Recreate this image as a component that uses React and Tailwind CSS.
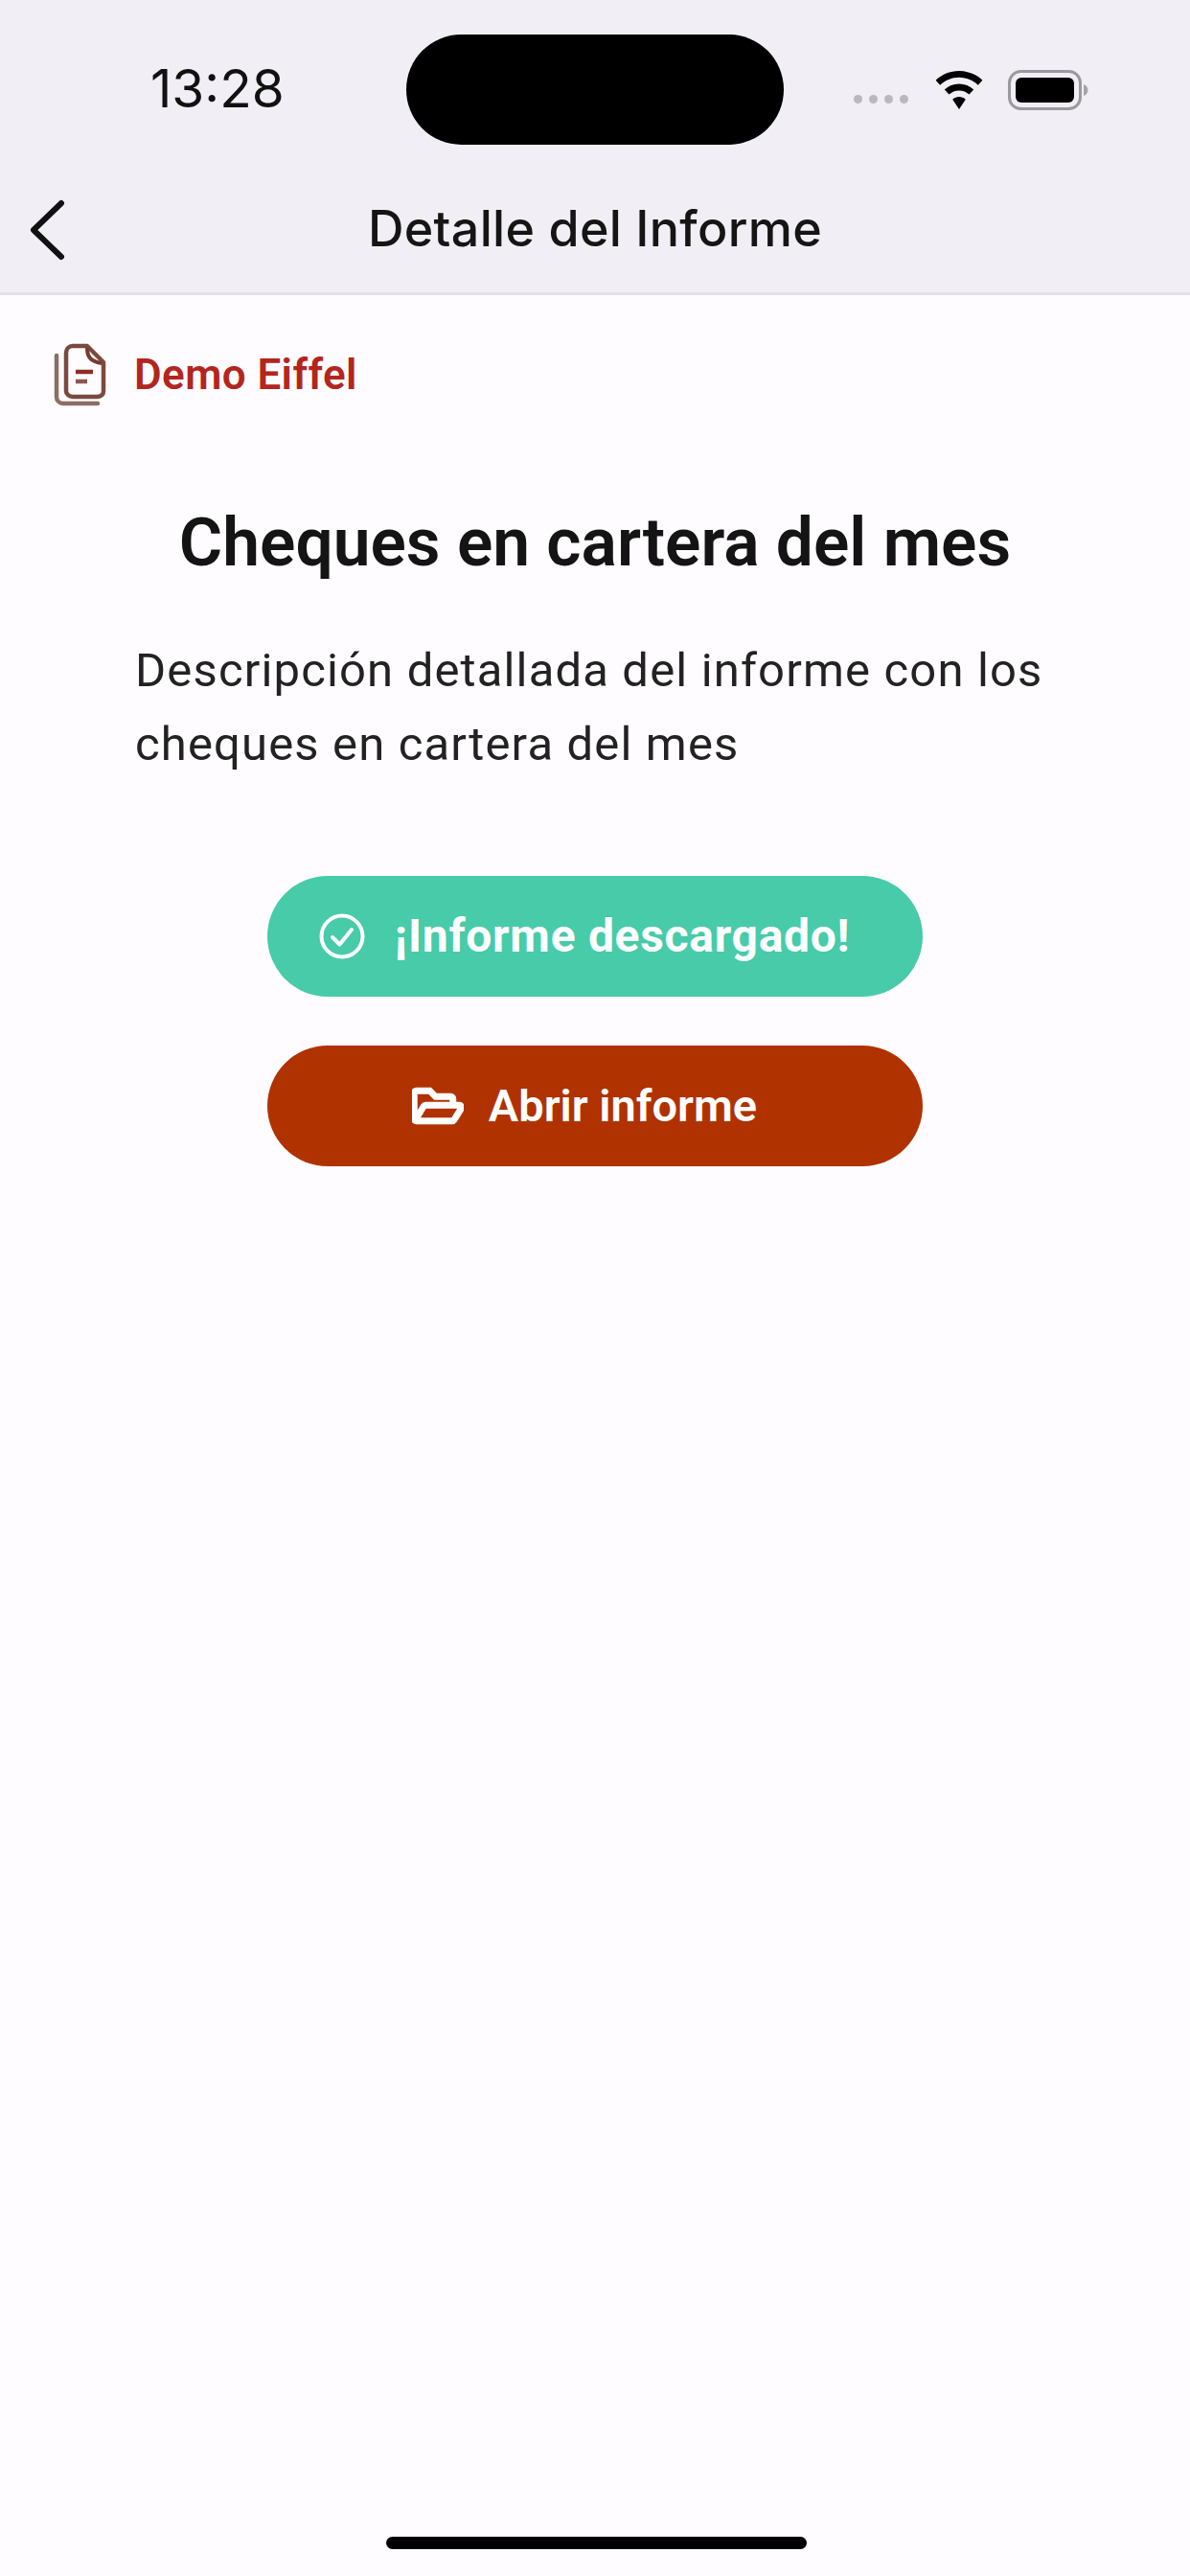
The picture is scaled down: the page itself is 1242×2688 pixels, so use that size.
import React from "react";
import { FaRegFolderOpen } from "react-icons/fa";

const font = { fontFamily: "Roboto, sans-serif" };

const ChevronBack = () => (
  <svg width="40" height="64" viewBox="0 0 40 64" fill="none" stroke="#111" strokeWidth="6" strokeLinecap="round" strokeLinejoin="round">
    <path d="M35 4 L6 32 L35 60" />
  </svg>
);

const Wifi = () => (
  <svg width="50" height="40" viewBox="0 0 50 40" fill="#000">
    <path d="M25 0C15.5 0 7 3.700 .6 9.700l4.600 5C10.400 9.900 17.300 6.800 25 6.800s14.600 3.100 19.800 7.900l4.600-5C43 3.700 34.500 0 25 0z" />
    <path d="M25 13.500c-5.900 0-11.200 2.300-15.200 6l4.700 5c2.800-2.500 6.400-4.100 10.500-4.100s7.700 1.600 10.500 4.100l4.700-5c-4-3.700-9.300-6-15.200-6z" />
    <path d="M25 27c-2.600 0-5 1-6.800 2.700L25 40l6.800-10.300C30 28 27.600 27 25 27z" />
  </svg>
);

const Battery = () => (
  <svg width="84" height="42" viewBox="0 0 84 42" fill="none">
    <rect x="1.500" y="1.500" width="74" height="39" rx="12" stroke="#9a9a9e" strokeWidth="3" />
    <rect x="8" y="8" width="61" height="26" rx="6" fill="#000" />
    <path d="M79 15c3 1 4.500 3.500 4.500 6s-1.500 5-4.500 6z" fill="#a5a5a8" />
  </svg>
);

const DocIcon = () => (
  <svg width="56" height="66" viewBox="0 0 56 66" fill="none" strokeLinejoin="round">
    <path d="M4 13v43c0 4 3 7 7 7h36" stroke="#8d6e63" strokeWidth="4.500" strokeLinecap="round" />
    <path d="M14 10c0-4 3-7 7-7h15l17 17v30c0 4-3 6-7 6H21c-4 0-7-3-7-6z" stroke="#7a4a3f" strokeWidth="4.500" />
    <path d="M36 5c0 8 2 14 15 16" stroke="#7a3a30" strokeWidth="4" />
    <path d="M24 30h18" stroke="#8a3020" strokeWidth="4.500" />
    <path d="M24 40h12" stroke="#8a5a50" strokeWidth="4.500" />
  </svg>
);

const CheckCircle = () => (
  <svg width="48" height="48" viewBox="0 0 48 48" fill="none" stroke="#fff" strokeWidth="4" strokeLinecap="round" strokeLinejoin="round">
    <circle cx="24" cy="24" r="21.500" />
    <path d="M14 25l7.500 7.500L34 17" />
  </svg>
);

const App = () => {
  return (
    <div className="w-[1242px] h-[2688px] flex flex-col bg-[#fffcff]" style={font}>
      {/* barra superior */}
      <header className="h-[308px] shrink-0 bg-[#f1eff5] border-b-[3px] border-[#e4e2e8] flex flex-col">
        <div className="flex items-center pt-[36px] h-[151px]">
          <span className="w-[424px] pl-[157px] pb-[2px] text-[55px] leading-none font-['Inter'] text-[#111]">13:28</span>
          <div className="w-[394px] h-[115px] rounded-full bg-black" />
          <div className="flex items-center pl-[73px]">
            <div className="flex gap-[7px] mt-[19px] mr-[28px]">
              {[0, 1, 2, 3].map((i) => (
                <span key={i} className="w-[9px] h-[9px] rounded-full bg-[#b9b8bd]" />
              ))}
            </div>
            <Wifi />
            <div className="ml-[26px]">
              <Battery />
            </div>
          </div>
        </div>
        <div className="relative flex-1 flex items-center justify-center pt-[22px]">
          <div className="absolute left-[29px] top-[57px]">
            <ChevronBack />
          </div>
          <span className="text-[52px] leading-none font-medium font-['Inter'] text-[#151515] tracking-[0.3px]">Detalle del Informe</span>
        </div>
      </header>

      <main className="flex-1 flex flex-col relative">
        <div className="flex items-center pl-[55px] pt-[50px] gap-[29px]">
          <DocIcon />
          <span className="text-[44px] leading-none font-semibold text-[#b3261e] tracking-[0.4px]">Demo Eiffel</span>
        </div>
        <h1 className="mt-[105px] text-center text-[69.5px] leading-[76px] font-semibold text-[#141414]">Cheques en cartera del mes</h1>
        <p className="mt-[56px] ml-[141px] w-[1000px] text-[49px] leading-[77px] text-[#222] tracking-[1.15px]">
          Descripción detallada del informe con los
          <br />
          cheques en cartera del mes
        </p>
        <div className="mt-[99px] flex flex-col items-center gap-[51px]">
          <button className="w-[684px] h-[126px] rounded-full bg-[#47cba9] flex items-center justify-center gap-[31px] pr-[22px] text-white text-[48px] font-bold tracking-[0.7px]">
            <CheckCircle />
            <span>¡Informe descargado!</span>
          </button>
          <button className="w-[684px] h-[126px] rounded-full bg-[#b03200] flex items-center justify-center gap-[26px] pr-[22px] text-white text-[47px] font-semibold">
            <FaRegFolderOpen size={54} stroke="currentColor" strokeWidth={26} />
            <span>Abrir informe</span>
          </button>
        </div>
        <div className="absolute bottom-[28px] left-[403px] w-[439px] h-[13px] rounded-full bg-black" />
      </main>
    </div>
  );
};

export default App;
